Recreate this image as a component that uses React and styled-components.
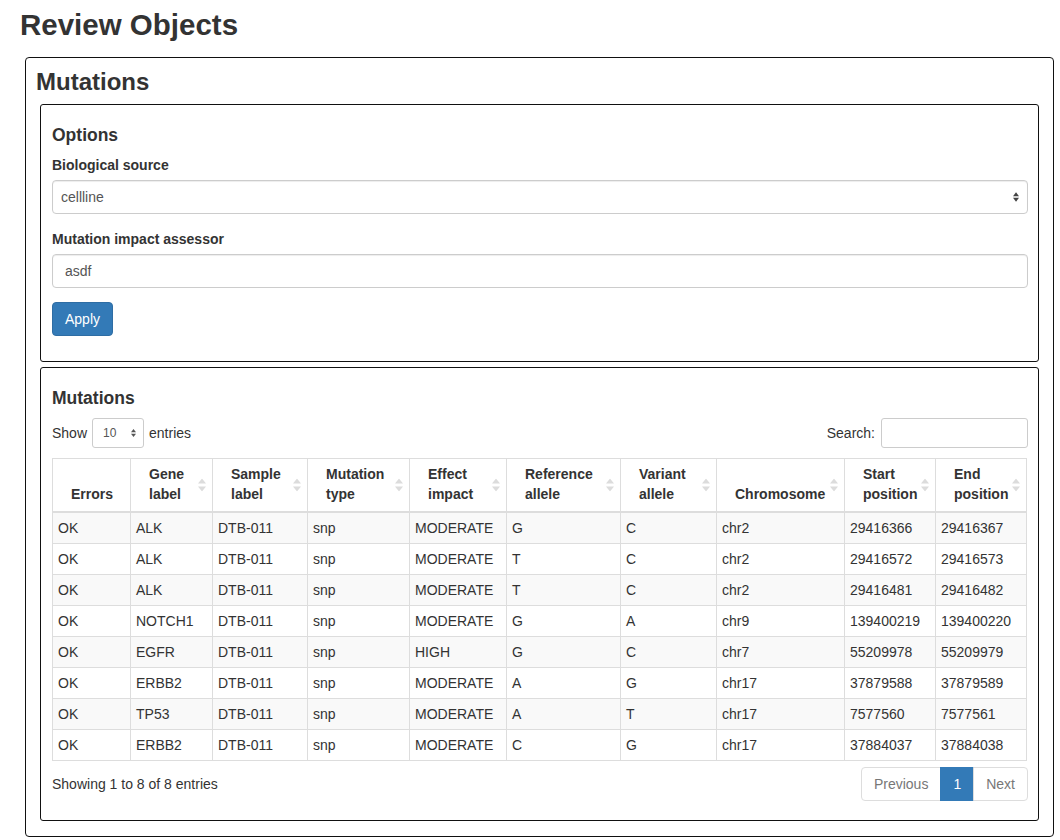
import styled, { createGlobalStyle } from "styled-components";

const GlobalStyle = createGlobalStyle`
  * { box-sizing: border-box; }
  body {
    margin: 0;
    font-family: "Liberation Sans", Arial, sans-serif;
    font-size: 14px;
    line-height: 20px;
    color: #333;
    background: #fff;
  }
`;

const rows = [
  ["OK", "ALK", "DTB-011", "snp", "MODERATE", "G", "C", "chr2", "29416366", "29416367"],
  ["OK", "ALK", "DTB-011", "snp", "MODERATE", "T", "C", "chr2", "29416572", "29416573"],
  ["OK", "ALK", "DTB-011", "snp", "MODERATE", "T", "C", "chr2", "29416481", "29416482"],
  ["OK", "NOTCH1", "DTB-011", "snp", "MODERATE", "G", "A", "chr9", "139400219", "139400220"],
  ["OK", "EGFR", "DTB-011", "snp", "HIGH", "G", "C", "chr7", "55209978", "55209979"],
  ["OK", "ERBB2", "DTB-011", "snp", "MODERATE", "A", "G", "chr17", "37879588", "37879589"],
  ["OK", "TP53", "DTB-011", "snp", "MODERATE", "A", "T", "chr17", "7577560", "7577561"],
  ["OK", "ERBB2", "DTB-011", "snp", "MODERATE", "C", "G", "chr17", "37884037", "37884038"],
];

const columns = [
  { label: "Errors", width: 78, sortable: false },
  { label: "Gene label", width: 82, sortable: true },
  { label: "Sample label", width: 95, sortable: true },
  { label: "Mutation type", width: 102, sortable: true },
  { label: "Effect impact", width: 97, sortable: true },
  { label: "Reference allele", width: 114, sortable: true },
  { label: "Variant allele", width: 96, sortable: true },
  { label: "Chromosome", width: 128, sortable: true },
  { label: "Start position", width: 91, sortable: true },
  { label: "End position", width: 91, sortable: true },
];

const Page = styled.div`
  padding: 8px 6px 5px 25px;
`;

const PageTitle = styled.h1`
  margin: 0 0 16px -5px;
  font-size: 29.5px;
  line-height: 33px;
  font-weight: 700;
  color: #333;
`;

const Panel = styled.div`
  border: 1px solid #111;
  border-radius: 4px;
  padding: 10px 14px 15px;
`;

const PanelTitle = styled.h2`
  margin: 0 0 8px -4px;
  font-size: 24px;
  line-height: 28px;
  font-weight: 700;
`;

const Box = styled.div`
  border: 1px solid #111;
  border-radius: 3px;
  padding: 20px 10px ${(p) => p.$pb}px 11px;
  & + & {
    margin-top: 5px;
  }
`;

const BoxTitle = styled.h3`
  margin: 0 0 10px;
  font-size: 17.5px;
  line-height: 20px;
  font-weight: 700;
`;

const FormGroup = styled.div`
  margin-bottom: ${(p) => p.$mb}px;
`;

const Label = styled.label`
  display: block;
  font-weight: 700;
  margin-bottom: 5px;
`;

const SelectBox = styled.div`
  position: relative;
  height: 34px;
  border: 1px solid #ccc;
  border-radius: 4px;
  padding: 6px 8px;
  color: #555;
  box-shadow: inset 0 1px 1px rgba(0, 0, 0, 0.075);
`;

const SelectArrow = styled.svg`
  position: absolute;
  right: ${(p) => p.$right}px;
  top: 50%;
  transform: translateY(-50%);
`;

const TextInput = styled.div`
  height: 34px;
  border: 1px solid #ccc;
  border-radius: 4px;
  padding: 6px 12px;
  color: #555;
  box-shadow: inset 0 1px 1px rgba(0, 0, 0, 0.075);
`;

const Button = styled.button`
  font-family: inherit;
  font-size: 14px;
  line-height: 20px;
  color: #fff;
  background: #337ab7;
  border: 1px solid #2e6da4;
  border-radius: 4px;
  padding: 6px 12px;
  height: 34px;
`;

const Controls = styled.div`
  display: flex;
  justify-content: space-between;
  align-items: center;
  height: 30px;
`;

const InlineLabel = styled.div`
  display: flex;
  align-items: center;
  gap: 5px;
`;

const SmallSelect = styled.div`
  position: relative;
  width: 52px;
  height: 30px;
  border: 1px solid #ccc;
  border-radius: 3px;
  padding: 5px 10px;
  font-size: 12px;
  line-height: 18px;
  color: #555;
`;

const SearchInput = styled.div`
  width: 147px;
  height: 30px;
  margin-left: 1px;
  border: 1px solid #ccc;
  border-radius: 3px;
`;

const Table = styled.table`
  width: 974px;
  margin-top: 10px;
  table-layout: fixed;
  border-collapse: collapse;
  border: 1px solid #ddd;
`;

const Th = styled.th`
  position: relative;
  text-align: left;
  vertical-align: bottom;
  font-weight: 700;
  padding: 5px 16px 7px 18px;
  border: 1px solid #ddd;
  border-bottom: 2px solid #ddd;
`;

const SortIcon = styled.svg`
  position: absolute;
  right: 6px;
  top: 50%;
  transform: translateY(-50%);
`;

const Tr = styled.tr`
  background: ${(p) => (p.$odd ? "#f9f9f9" : "#fff")};
`;

const Td = styled.td`
  padding: 5px;
  border: 1px solid #ddd;
  white-space: nowrap;
`;

const Footer = styled.div`
  display: flex;
  justify-content: space-between;
  align-items: center;
  margin-top: 6px;
`;

const Pagination = styled.div`
  display: flex;
`;

const PageLink = styled.span`
  display: block;
  padding: 6px 12px;
  line-height: 20px;
  border: 1px solid ${(p) => (p.$active ? "#337ab7" : "#ddd")};
  background: ${(p) => (p.$active ? "#337ab7" : "#fff")};
  color: ${(p) => (p.$active ? "#fff" : "#777")};
  margin-left: -1px;
  &:first-child {
    margin-left: 0;
    border-radius: 4px 0 0 4px;
  }
  &:last-child {
    border-radius: 0 4px 4px 0;
  }
`;

const UpDown = ({ right, color, w = 7, h = 11 }) => (
  <SelectArrow $right={right} width={w} height={h} viewBox="0 0 7 11">
    <path d="M3.5 0 L7 4.5 L0 4.5 Z" fill={color} />
    <path d="M3.5 11 L7 6.5 L0 6.5 Z" fill={color} />
  </SelectArrow>
);

const Sort = () => (
  <SortIcon width="8" height="13" viewBox="0 0 8 13">
    <path d="M4 0 L8 5 L0 5 Z" fill="#dcdcdc" />
    <path d="M4 13 L8 8 L0 8 Z" fill="#dcdcdc" />
  </SortIcon>
);

export default function App() {
  return (
    <>
      <GlobalStyle />
      <Page>
        <PageTitle>Review Objects</PageTitle>
        <Panel>
          <PanelTitle>Mutations</PanelTitle>
          <Box $pb={25}>
            <BoxTitle>Options</BoxTitle>
            <FormGroup $mb={15}>
              <Label>Biological source</Label>
              <SelectBox>
                cellline
                <UpDown right={8} color="#444" w={6} h={10} />
              </SelectBox>
            </FormGroup>
            <FormGroup $mb={14}>
              <Label>Mutation impact assessor</Label>
              <TextInput>asdf</TextInput>
            </FormGroup>
            <Button>Apply</Button>
          </Box>
          <Box $pb={19}>
            <BoxTitle>Mutations</BoxTitle>
            <Controls>
              <InlineLabel>
                Show
                <SmallSelect>
                  10
                  <UpDown right={7} color="#555" w={5} h={9} />
                </SmallSelect>
                entries
              </InlineLabel>
              <InlineLabel>
                Search:
                <SearchInput />
              </InlineLabel>
            </Controls>
            <Table>
              <colgroup>
                {columns.map((c) => (
                  <col key={c.label} style={{ width: c.width }} />
                ))}
              </colgroup>
              <thead>
                <tr>
                  {columns.map((c) => (
                    <Th key={c.label}>
                      {c.label}
                      {c.sortable && <Sort />}
                    </Th>
                  ))}
                </tr>
              </thead>
              <tbody>
                {rows.map((r, i) => (
                  <Tr key={i} $odd={i % 2 === 0}>
                    {r.map((v, j) => (
                      <Td key={j}>{v}</Td>
                    ))}
                  </Tr>
                ))}
              </tbody>
            </Table>
            <Footer>
              <div>Showing 1 to 8 of 8 entries</div>
              <Pagination>
                <PageLink>Previous</PageLink>
                <PageLink $active>1</PageLink>
                <PageLink>Next</PageLink>
              </Pagination>
            </Footer>
          </Box>
        </Panel>
      </Page>
    </>
  );
}
